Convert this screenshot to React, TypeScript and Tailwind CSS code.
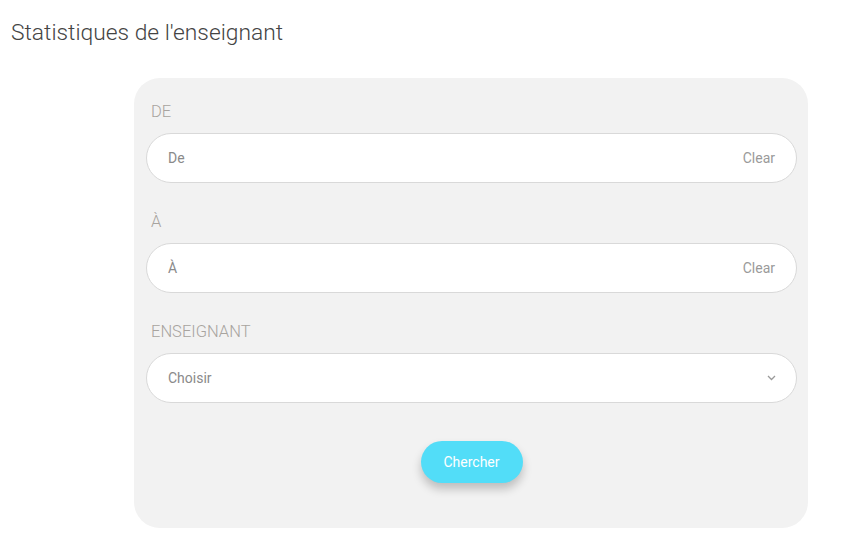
import React from "react";

function Field({ label, placeholder, first, select }: { label: string; placeholder: string; first?: boolean; select?: boolean }) {
  return (
    <div className="flex flex-col">
      <div className={`${first ? "" : "mt-[28px]"} mb-[10px] pl-[5px] text-[16.5px] leading-[22px] font-light text-[#a8a49f]`}>{label}</div>
      <div className={`flex h-[50px] items-center justify-between rounded-full border border-[#d9d9d9] bg-white pl-[21px] ${select ? "pr-[20px]" : "pr-[21px]"}`}>
        <span className="text-[14px] text-[#8a8a8a]">{placeholder}</span>
        {select ? (
          <svg width="9" height="6" viewBox="0 0 9 6">
            <path d="M1 1l3.5 3.5L8 1" fill="none" stroke="#9a9a9a" strokeWidth="1.3" />
          </svg>
        ) : (
          <span className="text-[14px] text-[#9a9a9a]">Clear</span>
        )}
      </div>
    </div>
  );
}

export default function App() {
  return (
    <div className="min-h-[549px] w-[866px] bg-white" style={{ fontFamily: "Roboto, 'Liberation Sans', sans-serif" }}>
      <h1 className="pl-[11px] pt-[19px] text-[22.8px] leading-[28px] font-light text-[#444]">Statistiques de l'enseignant</h1>
      <div className="ml-[134px] mt-[31px] w-[674px] rounded-[26px] bg-[#f2f2f2] pb-[45px] pl-[12px] pr-[11px] pt-[23px]">
        <Field label="DE" placeholder="De" first />
        <Field label="À" placeholder="À" />
        <Field label="ENSEIGNANT" placeholder="Choisir" select />
        <div className="mt-[38px] flex justify-center">
          <button className="h-[42px] w-[102px] rounded-full bg-[#52ddf8] text-[14px] text-white shadow-[0_6px_10px_rgba(0,0,0,0.22)]">Chercher</button>
        </div>
      </div>
    </div>
  );
}
